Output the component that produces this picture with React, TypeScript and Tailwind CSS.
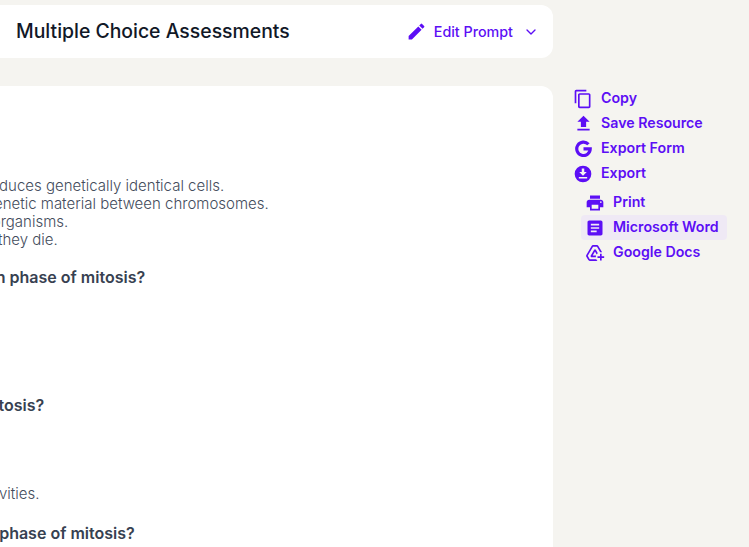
import React from 'react';
import { MdContentCopy, MdFileUpload, MdPrint, MdArticle, MdAddToDrive, MdEdit } from 'react-icons/md';
import { FiChevronDown } from 'react-icons/fi';

const font = { fontFamily: 'Inter, "Liberation Sans", sans-serif' };

// Filled circle with a download arrow; no package has this one as drawn.
const ExportIcon = ({ className }: { className?: string }) => (
  <svg viewBox="0 0 24 24" className={className} fill="currentColor">
    <path
      fillRule="evenodd"
      d="M12 2a10 10 0 1 0 0 20 10 10 0 0 0 0-20zM10.500 5.500h3v4h3L12 14l-4.500-4.500h3v-4zM7 15.500h10v2H7v-2z"
    />
  </svg>
);

const GoogleIcon = ({ className }: { className?: string }) => (
  <svg viewBox="0 0 24 24" className={className} fill="none" stroke="currentColor" strokeWidth="4.500">
    <path d="M19 6a9.500 9.500 0 1 0 2.500 6.500H12" />
  </svg>
);

const ActionRow = ({ icon, label }: { icon: React.ReactNode; label: string }) => (
  <div className="flex h-[25px] items-center gap-[9px] text-[14.2px] font-semibold whitespace-nowrap">
    <span className="flex w-[18px] justify-center">{icon}</span>
    <span className="pb-px">{label}</span>
  </div>
);

const ExportRow = ({ icon, label, active }: { icon: React.ReactNode; label: string; active?: boolean }) => (
  <div className={`flex h-[25px] items-center gap-[9px] rounded pl-[5px] text-[14.2px] font-semibold whitespace-nowrap ${active ? 'bg-[#efe9f5]' : ''}`}>
    <span className="flex w-[18px] justify-center">{icon}</span>
    <span className="pb-px">{label}</span>
  </div>
);

export default function App() {
  return (
    <div style={font} className="flex h-screen w-full overflow-hidden bg-[#f5f4f0]">
      <div className="flex w-[553px] shrink-0 flex-col pt-[5px]">
        <div className="flex h-[53px] items-center justify-between rounded-r-xl bg-white pl-4 pr-[14px]">
          <h1 className="text-[19.4px] font-medium text-[#111827]">Multiple Choice Assessments</h1>
          <div className="flex items-center text-[14.3px] font-medium text-[#5c0ef5]">
            <MdEdit className="h-[21px] w-[21px]" />
            <span className="ml-[7px]">Edit Prompt</span>
            <FiChevronDown className="ml-[10px] h-[16px] w-[16px]" />
          </div>
        </div>

        <div className="mt-[28px] flex-1 overflow-hidden rounded-tr-xl bg-white pt-[91px] whitespace-nowrap text-[#374151]">
          <div className="text-[15px] leading-[18px] font-light text-[#434c5c]">
            <p className="-ml-[96px]">A. Mitosis produces genetically identical cells.</p>
            <p className="-ml-[91px]">B. It mixes genetic material between chromosomes.</p>
            <p className="-ml-[83px]">C. In most organisms.</p>
            <p className="-ml-[86px]">D. So when they die.</p>
          </div>
          <p className="mt-[16px] -ml-[78px] text-base leading-6 font-semibold">2. In which phase of mitosis?</p>
          <p className="mt-[104px] -ml-[78px] text-base leading-6 font-semibold">3. Why mitosis?</p>
          <p className="mt-[68px] -ml-[75px] text-[15px] leading-[18px] font-light text-[#434c5c]">D. Cell activities.</p>
          <p className="mt-[18px] -ml-[67px] text-base leading-6 font-semibold">4. In the phase of mitosis?</p>
        </div>
      </div>

      <div className="flex w-[174px] flex-col pt-[86px] pl-[21px] text-[#5c0ef5]">
        <ActionRow icon={<MdContentCopy className="h-5 w-5 shrink-0" />} label="Copy" />
        <ActionRow icon={<MdFileUpload className="h-[21px] w-[21px] shrink-0" />} label="Save Resource" />
        <ActionRow icon={<GoogleIcon className="h-[17px] w-[17px] shrink-0" />} label="Export Form" />
        <ActionRow icon={<ExportIcon className="h-5 w-5 shrink-0" />} label="Export" />
        <div className="mt-[4px] ml-[7px] flex flex-col">
          <ExportRow icon={<MdPrint className="h-5 w-5 shrink-0" />} label="Print" />
          <ExportRow icon={<MdArticle className="h-5 w-5 shrink-0" />} label="Microsoft Word" active />
          <ExportRow icon={<MdAddToDrive className="h-5 w-5 shrink-0" />} label="Google Docs" />
        </div>
      </div>
    </div>
  );
}
